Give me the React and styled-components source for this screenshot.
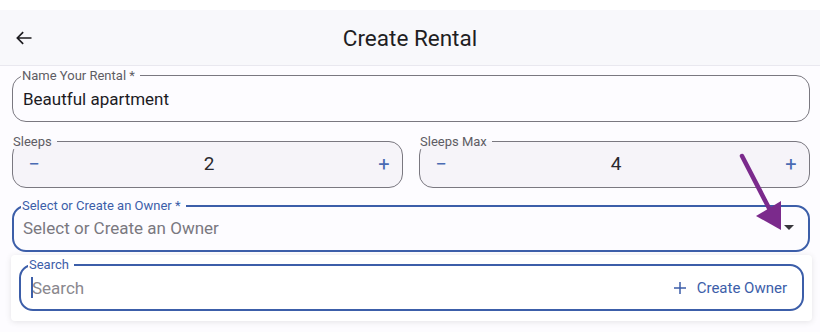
import React from "react";
import styled, { createGlobalStyle } from "styled-components";

const Global = createGlobalStyle`
  body {
    margin: 0;
    background: #ffffff;
    font-family: Roboto, "Liberation Sans", sans-serif;
  }
`;

const Page = styled.div`
  position: relative;
  width: 820px;
  height: 322px;
  background: #fdfcff;
`;

const Header = styled.header`
  margin-top: 10px;
  height: 55px;
  background: #f8f8fb;
  border-bottom: 1px solid #e9e8ef;
  display: flex;
  align-items: center;
`;

const BackButton = styled.div`
  width: 24px;
  height: 24px;
  margin-left: 12px;
  display: flex;
  align-items: center;
  justify-content: center;
  color: #1c1b1f;
`;

const Title = styled.h1`
  flex: 1;
  margin: 0 36px 0 0;
  text-align: center;
  font-size: 22.5px;
  font-weight: 400;
  color: #1f1e23;
`;

const Form = styled.div`
  padding: 2px 10px 0 12px;
  display: flex;
  flex-direction: column;
`;

const Row = styled.div`
  display: flex;
  gap: 16px;
  margin-top: 12px;
`;

const Field = styled.fieldset`
  flex: 1;
  margin: ${(p) => p.$mt ?? 0}px 0 0 0;
  padding: 0 ${(p) => (p.$active ? 9 : 10)}px;
  border: ${(p) => (p.$active ? "2px solid #3c5ea9" : "1px solid #7a7880")};
  border-radius: 14px;
  background: ${(p) => (p.$tinted ? "#f6f4f9" : "transparent")};
  min-width: 0;
`;

const Legend = styled.legend`
  font-size: 13px;
  line-height: 15px;
  padding: 0 5px 0 1px;
  margin-left: ${(p) => p.$offset ?? -2}px;
  color: ${(p) => (p.$active ? "#3c5ea9" : "#5e5c64")};
`;

const Value = styled.div`
  box-sizing: border-box;
  height: ${(p) => p.$h ?? 38}px;
  padding-bottom: ${(p) => p.$pb ?? 6}px;
  display: flex;
  align-items: center;
  font-size: 17px;
  color: ${(p) => (p.$placeholder ? "#7a787f" : "#1c1b1f")};
`;

const Stepper = styled.div`
  box-sizing: border-box;
  height: 38px;
  padding-bottom: 9px;
  margin-right: -3px;
  display: flex;
  align-items: center;
  justify-content: space-between;
`;

const StepButton = styled.span`
  width: 22px;
  text-align: center;
  font-size: 20px;
  color: #4a6bb3;
  line-height: 1;
`;

const StepValue = styled.span`
  font-size: 19px;
  color: #2a292e;
`;

const Caret = styled.span`
  margin-left: auto;
  margin-right: 5px;
  width: 0;
  height: 0;
  border-left: 5px solid transparent;
  border-right: 5px solid transparent;
  border-top: 5px solid #38373c;
`;

const Panel = styled.div`
  margin: 3px 0 0 11px;
  width: 785px;
  background: #ffffff;
  border-radius: 4px;
  box-shadow: 0 1px 6px rgba(0, 0, 0, 0.1);
  padding: 2px 8px 10px 8px;
`;

const Search = styled.div`
  box-sizing: border-box;
  height: 37px;
  padding-bottom: 6px;
  display: flex;
  align-items: center;
  font-size: 17px;
  color: #8a888e;
`;

const TextCaret = styled.span`
  width: 2px;
  height: 21px;
  background: #3c5ea9;
  margin-left: 1px;
  margin-right: -1px;
`;

const CreateOwner = styled.span`
  margin-left: auto;
  margin-right: 6px;
  display: flex;
  align-items: center;
  gap: 11px;
  font-size: 15px;
  color: #3c5ea9;
`;

const Pointer = styled.svg`
  position: absolute;
  left: 730px;
  top: 140px;
`;

export default function App() {
  return (
    <Page>
      <Global />
      <Header>
        <BackButton>
          <svg width="20" height="20" viewBox="0 0 24 24" fill="none" stroke="#1c1b1f" strokeWidth="2">
            <path d="M21 12H4M11 5l-7 7 7 7" />
          </svg>
        </BackButton>
        <Title>Create Rental</Title>
      </Header>
      <Form>
        <Field>
          <Legend>Name Your Rental *</Legend>
          <Value>Beautful apartment</Value>
        </Field>
        <Row>
          <Field $tinted>
            <Legend $offset={-11}>Sleeps</Legend>
            <Stepper>
              <StepButton>−</StepButton>
              <StepValue>2</StepValue>
              <StepButton>+</StepButton>
            </Stepper>
          </Field>
          <Field $tinted>
            <Legend $offset={-11}>Sleeps Max</Legend>
            <Stepper>
              <StepButton>−</StepButton>
              <StepValue>4</StepValue>
              <StepButton>+</StepButton>
            </Stepper>
          </Field>
        </Row>
        <Field $active $mt={10}>
          <Legend $active>Select or Create an Owner *</Legend>
          <Value $placeholder $h={37} $pb={8}>
            Select or Create an Owner
            <Caret />
          </Value>
        </Field>
      </Form>
      <Panel>
        <Field $active>
          <Legend $active>Search</Legend>
          <Search>
            <TextCaret />
            Search
            <CreateOwner>
              <svg width="12" height="12" viewBox="0 0 12 12" stroke="#3c5ea9" strokeWidth="1.5">
                <path d="M6 0v12M0 6h12" />
              </svg>
              Create Owner
            </CreateOwner>
          </Search>
        </Field>
      </Panel>
      <Pointer width="70" height="90" viewBox="0 0 70 90">
        <path d="M12 6 L41 62" stroke="#7b2a8c" strokeWidth="4.5" strokeLinecap="round" />
        <path d="M26 66 L51 80 L51 51 Z" fill="#7b2a8c" />
      </Pointer>
    </Page>
  );
}
